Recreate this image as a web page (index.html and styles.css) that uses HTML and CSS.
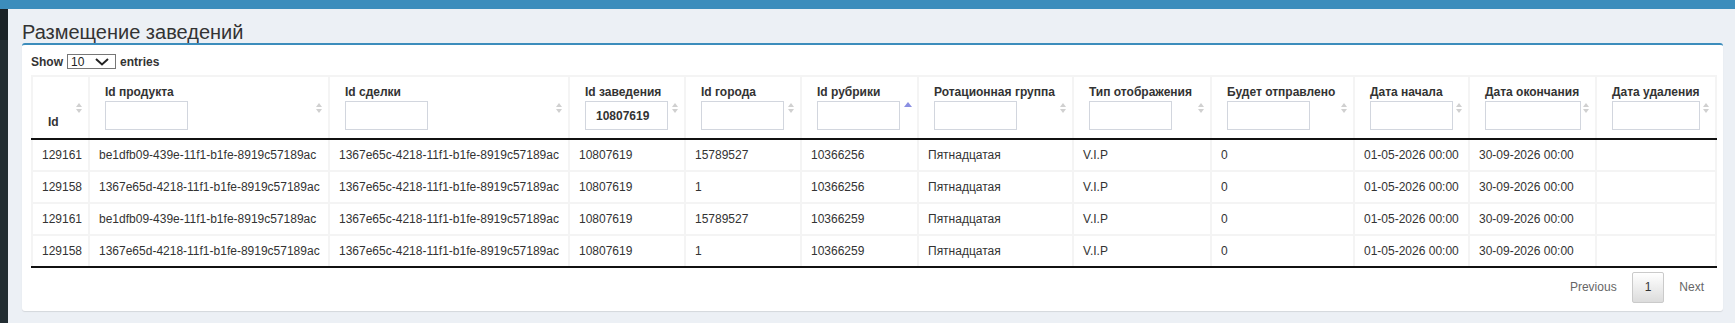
FILE: index.html
```html
<!DOCTYPE html>
<html lang="ru">
<head>
  <meta charset="UTF-8">
  <title>Размещение заведений</title>
  <link rel="stylesheet" href="styles.css">
</head>
<body>
  <div class="topbar"></div>
  <div class="wrapper">
    <aside class="sidebar"><div class="sidebar-top"></div></aside>

    <main class="content">
      <h1 class="page-title">Размещение заведений</h1>

      <div class="box">
        <div class="length">
          Show
          <span class="select">10
            <svg width="14" height="8" viewBox="0 0 14 8"><polyline points="1,1 7,6.5 13,1" fill="none" stroke="#222" stroke-width="2"/></svg>
          </span>
          entries
        </div>

        <table class="grid">
          <colgroup>
            <col class="w-id">
            <col class="w-uuid">
            <col class="w-uuid">
            <col class="w-116">
            <col class="w-116">
            <col class="w-117">
            <col class="w-rot">
            <col class="w-type">
            <col class="w-send">
            <col class="w-start">
            <col class="w-end">
            <col class="w-del">
          </colgroup>
          <thead>
            <tr>
              <th class="sorting">Id</th>
              <th class="sorting">Id продукта<input type="text"></th>
              <th class="sorting">Id сделки<input type="text"></th>
              <th class="sorting">Id заведения<input type="text" value="10807619"></th>
              <th class="sorting">Id города<input type="text"></th>
              <th class="sorting_asc">Id рубрики<input type="text"></th>
              <th class="sorting">Ротационная группа<input type="text"></th>
              <th class="sorting">Тип отображения<input type="text"></th>
              <th class="sorting">Будет отправлено<input type="text"></th>
              <th class="sorting">Дата начала<input type="text"></th>
              <th class="sorting">Дата окончания<input type="text" class="in-wide"></th>
              <th class="sorting">Дата удаления<input type="text" class="in-mid"></th>
            </tr>
          </thead>
          <tbody>
            <tr>
              <td>129161</td>
              <td>be1dfb09-439e-11f1-b1fe-8919c57189ac</td>
              <td>1367e65c-4218-11f1-b1fe-8919c57189ac</td>
              <td>10807619</td>
              <td>15789527</td>
              <td>10366256</td>
              <td>Пятнадцатая</td>
              <td>V.I.P</td>
              <td>0</td>
              <td>01-05-2026 00:00</td>
              <td>30-09-2026 00:00</td>
              <td></td>
            </tr>
            <tr>
              <td>129158</td>
              <td>1367e65d-4218-11f1-b1fe-8919c57189ac</td>
              <td>1367e65c-4218-11f1-b1fe-8919c57189ac</td>
              <td>10807619</td>
              <td>1</td>
              <td>10366256</td>
              <td>Пятнадцатая</td>
              <td>V.I.P</td>
              <td>0</td>
              <td>01-05-2026 00:00</td>
              <td>30-09-2026 00:00</td>
              <td></td>
            </tr>
            <tr>
              <td>129161</td>
              <td>be1dfb09-439e-11f1-b1fe-8919c57189ac</td>
              <td>1367e65c-4218-11f1-b1fe-8919c57189ac</td>
              <td>10807619</td>
              <td>15789527</td>
              <td>10366259</td>
              <td>Пятнадцатая</td>
              <td>V.I.P</td>
              <td>0</td>
              <td>01-05-2026 00:00</td>
              <td>30-09-2026 00:00</td>
              <td></td>
            </tr>
            <tr>
              <td>129158</td>
              <td>1367e65d-4218-11f1-b1fe-8919c57189ac</td>
              <td>1367e65c-4218-11f1-b1fe-8919c57189ac</td>
              <td>10807619</td>
              <td>1</td>
              <td>10366259</td>
              <td>Пятнадцатая</td>
              <td>V.I.P</td>
              <td>0</td>
              <td>01-05-2026 00:00</td>
              <td>30-09-2026 00:00</td>
              <td></td>
            </tr>
          </tbody>
        </table>

        <div class="paginate">
          <span class="pg-btn">Previous</span>
          <span class="pg-btn current">1</span>
          <span class="pg-btn">Next</span>
        </div>
      </div>
    </main>
  </div>
</body>
</html>
```

FILE: styles.css
```css
body {
  margin: 0;
  font-family: 'Liberation Sans', Arial, sans-serif;
  font-size: 12px;
  color: #333;
  background: #ecf0f5;
}

.topbar {
  height: 9px;
  background: #3c8dbc;
}

.wrapper {
  display: flex;
  min-height: 314px;
}

.sidebar {
  width: 8px;
  flex-shrink: 0;
  background: #222d32;
}

.sidebar-top {
  height: 31px;
  background: #1a2226;
}

.content {
  flex: 1;
  padding: 0 12px 0 14px;
}

.page-title {
  margin: 12px 0 0;
  font-size: 20px;
  font-weight: normal;
  line-height: 22px;
  color: #333;
}

.box {
  background: #fff;
  border-top: 2px solid #3c8dbc;
  border-radius: 3px;
  box-shadow: 0 1px 1px rgba(0,0,0,0.1);
  padding: 9px 6px 8px 9px;
}

/* show N entries */
.length {
  display: flex;
  align-items: center;
  gap: 4px;
  height: 15px;
  margin-bottom: 6px;
  font-weight: bold;
}

.select {
  display: inline-flex;
  align-items: center;
  justify-content: space-between;
  box-sizing: border-box;
  width: 49px;
  height: 15px;
  padding: 0 6px 0 3px;
  border: 1px solid #767676;
  font-weight: normal;
  color: #222;
}

/* table */
.grid {
  width: 1686px;
  table-layout: fixed;
  border-collapse: collapse;
}

.w-id { width: 57px; }
.w-uuid { width: 240px; }
.w-116 { width: 116px; }
.w-117 { width: 117px; }
.w-rot { width: 155px; }
.w-type { width: 138px; }
.w-send { width: 143px; }
.w-start { width: 115px; }
.w-end { width: 127px; }
.w-del { width: 120px; }

.grid th, .grid td {
  border: 2px solid #f4f4f4;
  text-align: left;
  line-height: 16px;
  white-space: nowrap;
}

.grid th {
  position: relative;
  padding: 7px 20px 8px 15px;
  vertical-align: bottom;
  font-weight: bold;
  border-bottom: 2px solid #111;
}

.grid td {
  padding: 7px 9px;
  vertical-align: middle;
}

.grid tbody tr:last-child td {
  border-bottom: 2px solid #111;
}

.grid th input {
  display: block;
  box-sizing: border-box;
  width: 83px;
  height: 29px;
  margin-top: 1px;
  padding: 0 10px;
  border: 1px solid #d2d6de;
  font: bold 12px 'Liberation Sans', Arial, sans-serif;
  color: #333;
  outline: none;
}

.grid th input.in-wide { width: 96px; }
.grid th input.in-mid { width: 88px; }

/* sort arrows */
.grid th.sorting::before,
.grid th.sorting::after {
  content: "";
  position: absolute;
  right: 6px;
  top: 50%;
  border-left: 3px solid transparent;
  border-right: 3px solid transparent;
}

.grid th.sorting::before {
  margin-top: -5px;
  border-bottom: 4px solid #d0d0d0;
}

.grid th.sorting::after {
  margin-top: 1px;
  border-top: 4px solid #d0d0d0;
}

.grid th.sorting_asc::after {
  content: "";
  position: absolute;
  right: 5px;
  top: 50%;
  margin-top: -6px;
  border-left: 4px solid transparent;
  border-right: 4px solid transparent;
  border-bottom: 5px solid #8a8fe2;
}

/* pagination */
.paginate {
  display: flex;
  justify-content: flex-end;
  margin-top: 4px;
}

.pg-btn {
  margin-left: 2px;
  padding: 7px 12px;
  border: 1px solid transparent;
  border-radius: 2px;
  line-height: 15px;
  color: #666;
}

.pg-btn.current {
  border-color: #cacaca;
  background: linear-gradient(to bottom, #fff 0%, #dcdcdc 100%);
  color: #333;
}
```
